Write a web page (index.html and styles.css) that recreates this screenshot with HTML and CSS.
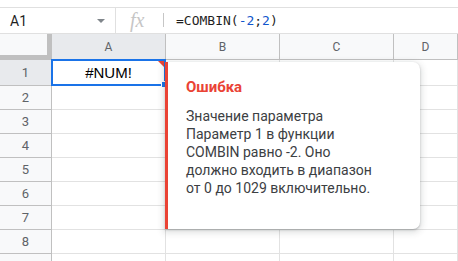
FILE: index.html
```html
<!DOCTYPE html>
<html lang="ru">
<head>
  <meta charset="UTF-8" />
  <title>Таблица - COMBIN</title>
  <link rel="stylesheet" href="styles.css">
</head>
<body>
  <div class="toolbar-gap"></div>

  <div class="formula-bar">
    <div class="name-box">
      <span class="cell-ref">A1</span>
      <span class="dropdown"></span>
    </div>
    <div class="fx">fx</div>
    <div class="formula">=COMBIN(<span class="num">-2</span>;<span class="num">2</span>)</div>
  </div>

  <div class="sheet">
    <div class="grid">
      <div class="corner"></div>
      <div class="col-head selected">A</div>
      <div class="col-head">B</div>
      <div class="col-head">C</div>
      <div class="col-head">D</div>

      <div class="row-head selected">1</div>
      <div class="cell active">#NUM!<span class="error-flag"></span><span class="handle"></span></div>
      <div class="cell"></div>
      <div class="cell"></div>
      <div class="cell"></div>

      <div class="row-head">2</div><div class="cell"></div><div class="cell"></div><div class="cell"></div><div class="cell"></div>
      <div class="row-head">3</div><div class="cell"></div><div class="cell"></div><div class="cell"></div><div class="cell"></div>
      <div class="row-head">4</div><div class="cell"></div><div class="cell"></div><div class="cell"></div><div class="cell"></div>
      <div class="row-head">5</div><div class="cell"></div><div class="cell"></div><div class="cell"></div><div class="cell"></div>
      <div class="row-head">6</div><div class="cell"></div><div class="cell"></div><div class="cell"></div><div class="cell"></div>
      <div class="row-head">7</div><div class="cell"></div><div class="cell"></div><div class="cell"></div><div class="cell"></div>
      <div class="row-head">8</div><div class="cell"></div><div class="cell"></div><div class="cell"></div><div class="cell"></div>
      <div class="row-head"></div><div class="cell"></div><div class="cell"></div><div class="cell"></div><div class="cell"></div>
    </div>

    <div class="error-popup">
      <div class="error-title">Ошибка</div>
      <div class="error-text">
        Значение параметра<br>
        Параметр 1 в функции<br>
        COMBIN равно -2. Оно<br>
        должно входить в диапазон<br>
        от 0 до 1029 включительно.
      </div>
    </div>
  </div>
</body>
</html>
```

FILE: styles.css
```css
body {
  margin: 0;
  font-family: Roboto, "Liberation Sans", Arial, sans-serif;
  background: #fff;
  overflow: hidden;
}

.toolbar-gap {
  height: 7px;
  border-bottom: 1px solid #e0e0e0;
}

.formula-bar {
  display: flex;
  align-items: center;
  height: 25px;
  border-bottom: 1px solid #e0e0e0;
}

.name-box {
  display: flex;
  align-items: center;
  justify-content: space-between;
  width: 116px;
  height: 100%;
  padding: 0 10px 0 10px;
  box-sizing: border-box;
  border-right: 1px solid #e0e0e0;
}

.cell-ref {
  font-size: 14px;
  color: #1f1f1f;
}

.dropdown {
  width: 0;
  height: 0;
  border-left: 4px solid transparent;
  border-right: 4px solid transparent;
  border-top: 4px solid #80868b;
  margin-top: 1px;
}

.fx {
  width: 48px;
  height: 100%;
  box-sizing: border-box;
  padding-left: 14px;
  font-family: "Liberation Serif", "DejaVu Serif", serif;
  font-style: italic;
  font-size: 20px;
  line-height: 25px;
  color: #c6c6c6;
  position: relative;
}

.fx::after {
  content: "";
  position: absolute;
  right: 0;
  top: 5px;
  width: 1px;
  height: 14px;
  background: #c6c6c6;
}

.formula {
  padding-left: 12px;
  font-family: "DejaVu Sans Mono", "Liberation Mono", monospace;
  font-size: 13px;
  color: #1f1f1f;
}

.formula .num {
  color: #1155cc;
}

.sheet {
  position: relative;
}

.grid {
  display: grid;
  grid-template-columns: 52px 114px 114px 114px 1fr;
  grid-template-rows: 26px 26px repeat(8, 24px);
}

.corner {
  background: #f8f9fa;
  border-right: 5px solid #c0c0c0;
  border-bottom: 5px solid #c0c0c0;
  box-sizing: border-box;
}

.col-head,
.row-head {
  display: flex;
  align-items: center;
  justify-content: center;
  background: #f8f9fa;
  border-right: 1px solid #c0c0c0;
  border-bottom: 1px solid #c0c0c0;
  box-sizing: border-box;
  color: #5f6368;
}

.col-head {
  font-size: 12px;
}

.row-head {
  font-size: 13px;
}

.col-head.selected,
.row-head.selected {
  background: #e8eaed;
}

.cell {
  border-right: 1px solid #e2e2e2;
  border-bottom: 1px solid #e2e2e2;
  box-sizing: border-box;
}

.cell.active {
  position: relative;
  display: flex;
  align-items: center;
  justify-content: center;
  font-family: "Liberation Sans", Arial, sans-serif;
  font-size: 15px;
  color: #000;
  border: 2px solid #1a73e8;
  margin: -1px 0 0 -1px;
}

.error-flag {
  position: absolute;
  top: 0;
  right: 0;
  width: 0;
  height: 0;
  border-top: 6px solid #ea4335;
  border-left: 6px solid transparent;
}

.handle {
  position: absolute;
  right: -4px;
  bottom: -4px;
  width: 5px;
  height: 5px;
  background: #1a73e8;
  border: 1px solid #fff;
}

.error-popup {
  position: absolute;
  left: 165px;
  top: 28px;
  width: 255px;
  height: 167px;
  box-sizing: border-box;
  padding: 16px 16px 0 18px;
  background: #fff;
  border-left: 3px solid #ea4335;
  border-radius: 0 7px 7px 0;
  box-shadow: 0 2px 6px 2px rgba(60, 64, 67, 0.15), 0 1px 2px rgba(60, 64, 67, 0.3);
}

.error-title {
  font-size: 15px;
  font-weight: 700;
  color: #ea4335;
  margin-bottom: 11px;
}

.error-text {
  font-size: 14px;
  line-height: 18px;
  color: #3c4043;
}
```
